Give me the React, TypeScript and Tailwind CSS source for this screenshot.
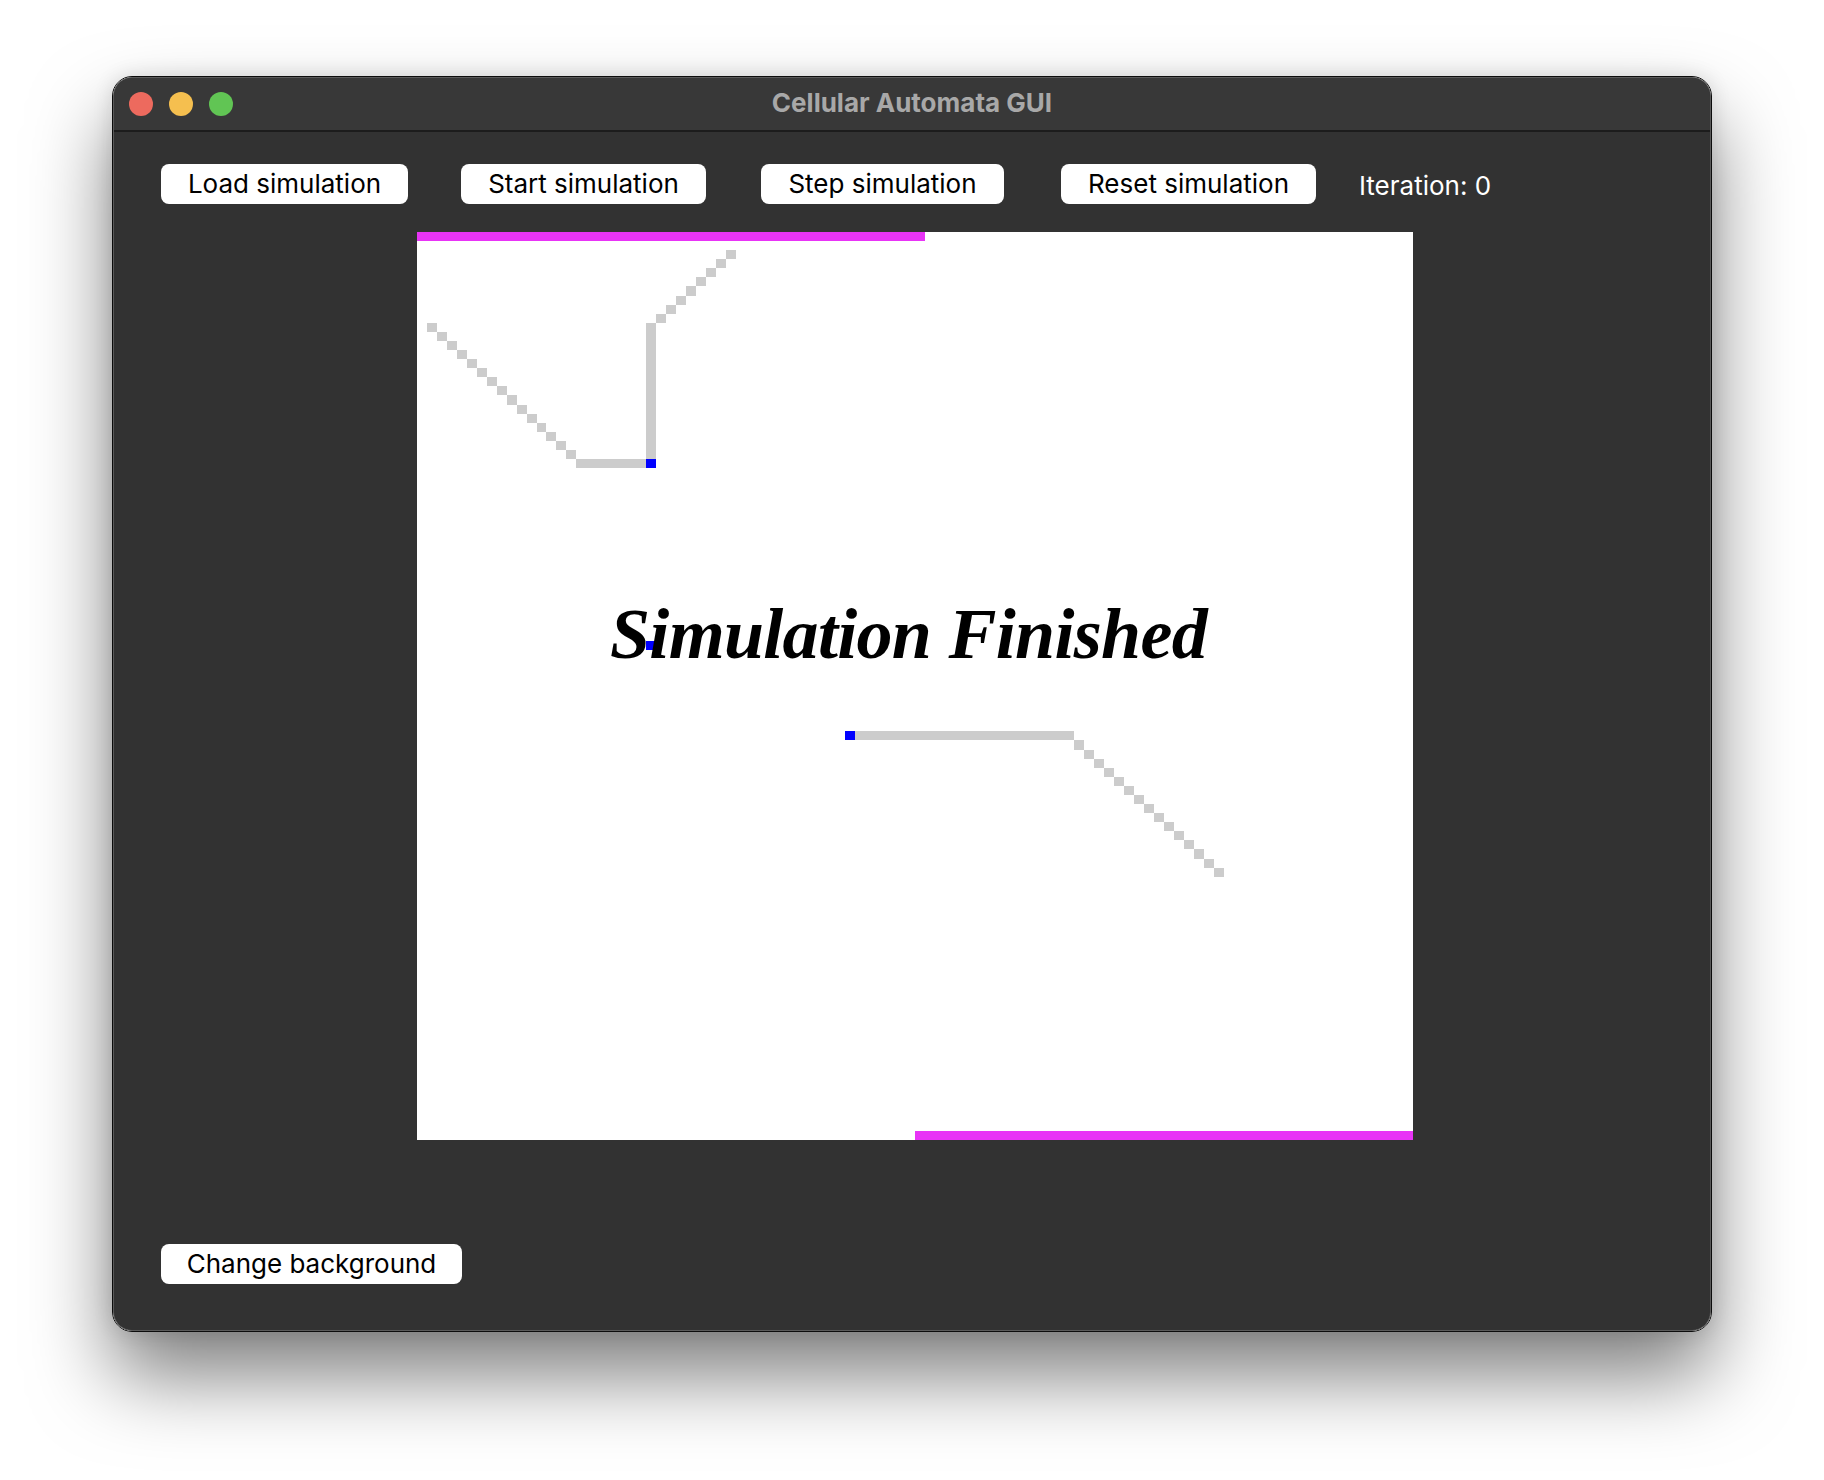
import React from 'react';

type Cell = [number, number];

const range = (a: number, b: number) => Array.from({ length: b - a + 1 }, (_, i) => a + i);

// grid is 100 x 100 cells, drawn into a 996 x 908 canvas
const trail: Cell[] = [
  ...range(1, 15).map((c) => [c, c + 9] as Cell),
  ...range(16, 22).map((c) => [c, 25] as Cell),
  ...range(10, 24).map((r) => [23, r] as Cell),
  ...range(24, 31).map((c) => [c, 33 - c] as Cell),
  ...range(44, 65).map((c) => [c, 55] as Cell),
  ...range(66, 80).map((c) => [c, c - 10] as Cell),
];

const ants: Cell[] = [
  [23, 25],
  [23, 45],
  [43, 55],
];

function Button({ label, width, className = '' }: { label: string; width: string; className?: string }) {
  return (
    <button
      className={`${width} ${className} h-[40px] shrink-0 rounded-[8px] bg-white text-[26px] leading-none text-black font-['Inter',sans-serif] flex items-center justify-center`}
    >
      {label}
    </button>
  );
}

function Grid() {
  return (
    <div className="relative w-[996px] h-[908px] bg-white">
      <svg
        width={996}
        height={908}
        viewBox="0 0 100 100"
        preserveAspectRatio="none"
        shapeRendering="crispEdges"
        className="block"
      >
        <rect x={0} y={0} width={51} height={1} fill="#e834f6" />
        <rect x={50} y={99} width={50} height={1} fill="#e834f6" />
        {trail.map(([c, r], i) => (
          <rect key={i} x={c} y={r} width={1} height={1} fill="#cccccc" />
        ))}
        {ants.map(([c, r], i) => (
          <rect key={`a${i}`} x={c} y={r} width={1} height={1} fill="#0000ff" />
        ))}
      </svg>
      <div className="absolute left-[193px] top-[366px] text-[72px] leading-none font-bold italic tracking-[-0.7px] text-black font-['Liberation_Serif',serif] whitespace-nowrap">
        Simulation Finished
      </div>
    </div>
  );
}

export default function App() {
  return (
    <div className="w-[1824px] h-[1480px] bg-white pt-[76px] pl-[112px] overflow-hidden">
      <div className="w-[1600px] h-[1256px] rounded-[20px] border border-[#0c0c0c] shadow-[0_0_20px_rgba(0,0,0,0.12),0_44px_80px_rgba(0,0,0,0.5)]">
        <div className="w-full h-full rounded-[19px] border border-[#5a5a5a] overflow-hidden flex flex-col bg-[#323232]">
          {/* title bar */}
          <div className="relative h-[54px] shrink-0 bg-[#383838] border-b-2 border-[#1c1c1c] flex items-center pl-[15px] gap-[16px]">
            <span className="w-[24px] h-[24px] rounded-full bg-[#ed6a5e]" />
            <span className="w-[24px] h-[24px] rounded-full bg-[#f5bf4f]" />
            <span className="w-[24px] h-[24px] rounded-full bg-[#61c554]" />
            <div className="absolute inset-0 pb-[3px] flex items-center justify-center text-[26px] font-bold text-[#a8a8a8] font-['Inter',sans-serif]">
              Cellular Automata GUI
            </div>
          </div>

          {/* toolbar */}
          <div className="flex items-center pt-[32px] pl-[47px]">
            <Button label="Load simulation" width="w-[247px]" />
            <Button label="Start simulation" width="w-[245px]" className="ml-[53px]" />
            <Button label="Step simulation" width="w-[243px]" className="ml-[55px]" />
            <Button label="Reset simulation" width="w-[255px]" className="ml-[57px]" />
            <span className="ml-[43px] mt-[4px] text-[26px] leading-none text-white font-['Inter',sans-serif]">
              Iteration: 0
            </span>
          </div>

          <div className="pl-[303px] pt-[28px]">
            <Grid />
          </div>

          <div className="pl-[47px] pt-[104px]">
            <Button label="Change background" width="w-[301px]" />
          </div>
        </div>
      </div>
    </div>
  );
}
